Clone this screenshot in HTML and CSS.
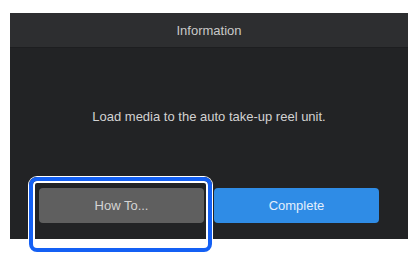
FILE: index.html
```html
<!DOCTYPE html>
<html lang="en">
<head>
    <meta charset="UTF-8">
    <meta name="viewport" content="width=device-width, initial-scale=1.0">
    <title>Information</title>
    <link rel="stylesheet" href="styles.css">
</head>
<body>
    <div class="dialog">
        <div class="dialog-header">Information</div>
        <div class="dialog-body">
            <p class="message">Load media to the auto take-up reel unit.</p>
            <div class="actions">
                <div class="focus-wrap">
                    <button class="btn btn-gray">How To...</button>
                    <span class="focus-ring"></span>
                </div>
                <button class="btn btn-blue">Complete</button>
            </div>
        </div>
    </div>
</body>
</html>
```

FILE: styles.css
```css
*,
*:before,
*:after {
    padding: 0;
    margin: 0;
    box-sizing: border-box;
}

body {
    font-family: "Liberation Sans", Arial, sans-serif;
    background-color: #ffffff;
    width: 419px;
    height: 273px;
    overflow: hidden;
}

.dialog {
    margin: 13px 11px 0 10px;
    width: 398px;
    background-color: #222325;
}

.dialog-header {
    height: 35px;
    background-color: #2d2e30;
    border-bottom: 1px solid #1d1e20;
    color: #c9c9c9;
    font-size: 13px;
    display: flex;
    align-items: center;
    justify-content: center;
}

.dialog-body {
    height: 191px;
    display: flex;
    flex-direction: column;
}

.message {
    margin-top: 60px;
    color: #d2d2d2;
    font-size: 13px;
    text-align: center;
    line-height: 18px;
}

.actions {
    margin-top: 62px;
    padding: 0 29px;
    display: flex;
    gap: 10px;
}

.focus-wrap {
    position: relative;
    flex: 1;
    display: flex;
}

.btn {
    flex: 1;
    height: 35px;
    border: none;
    border-radius: 4px;
    font-family: inherit;
    font-size: 13px;
}

.btn-gray {
    background-color: #5f5f5f;
    color: #d4d4d4;
}

.btn-blue {
    background-color: #2f8ce6;
    color: #e3effc;
}

.focus-ring {
    position: absolute;
    left: -10px;
    top: -11px;
    right: -8px;
    bottom: -29px;
    border: 4px solid #1460f4;
    border-radius: 8px;
    box-shadow: 0 0 0 1px #ffffff, inset 0 0 0 2px #ffffff;
    pointer-events: none;
}
```
